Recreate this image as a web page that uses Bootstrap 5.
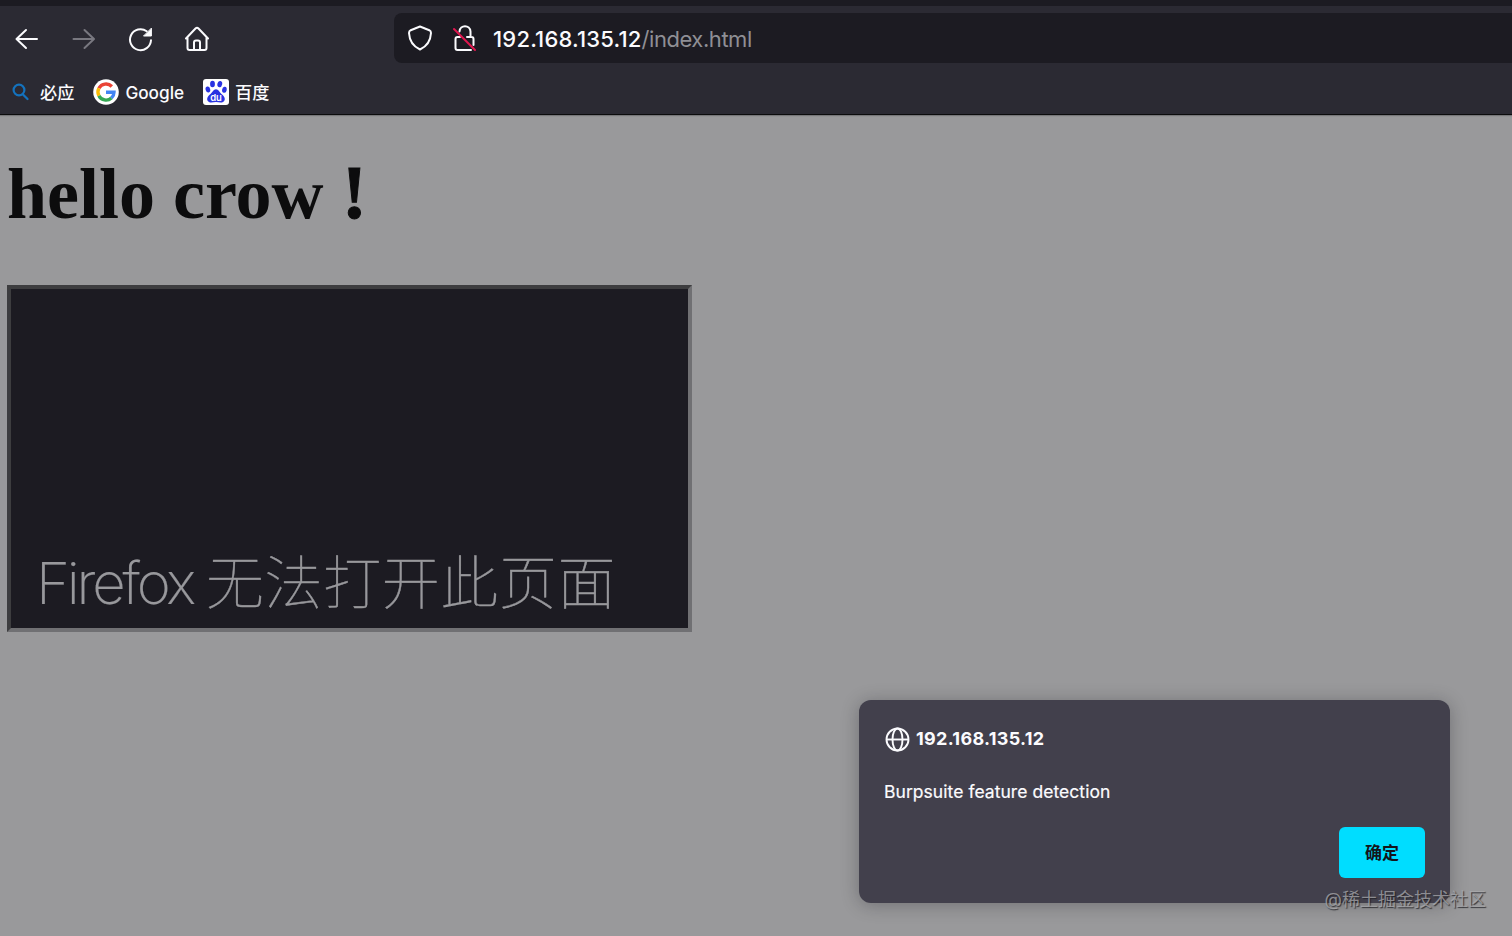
<!DOCTYPE html>
<html lang="zh-CN">
<head>
<meta charset="utf-8">
<title>192.168.135.12/index.html</title>
<link rel="stylesheet" href="https://cdn.jsdelivr.net/npm/bootstrap@5.3.0/dist/css/bootstrap.min.css">
<style>
  body { font-family: Inter, "Noto Sans CJK SC", sans-serif; background: #99999b; color: #fbfbfe; height: 936px; }
  svg { display: block; flex: none; }
  .chrome { height: 115px; background: #2b2a33; border-top: 6px solid #1c1b22; border-bottom: 1px solid #0c0c0d; box-shadow: 0 1px 1px #77777a; }
  .tools { height: 65px; }
  .nav-icons { width: 394px; padding: 1px 0 0 14px; gap: 31px; }
  .address { height: 50px; margin-bottom: 1px; background: #1c1b22; border-radius: 8px 0 0 8px; padding-left: 13px; font-size: 22px; letter-spacing: -.45px; }
  .address .shield { margin-right: 18px; }
  .address .lock { margin-right: 15px; }
  .address .url { padding-top: 2px; }
  .address .host { font-weight: 500; letter-spacing: .2px; }
  .address .path { color: #8f8f95; }
  .bookmarks { height: 43px; padding-left: 12px; font-size: 17.2px; font-weight: 500; }
  .bookmarks svg { margin-top: -1px; }
  .bookmarks .label { margin: 0 19px 0 6px; }
  .bookmarks .label-bing { margin: 0 19px 0 11px; }
  .viewport { height: 821px; padding: 41px 7px 0; }
  .greeting { font: bold 72px/76px "Liberation Serif", serif; color: #0c0c0d; margin: 0 0 53px 0; }
  .greeting .bang { font-size: 76px; line-height: 0; -webkit-text-stroke: 1px #0c0c0d; }
  .frame { width: 685px; height: 347px; background: #1c1b22; border: 4px solid; border-color: #3d3d3f #707073 #707073 #3d3d3f; padding: 0 0 9px 25px; }
  .frame h2 { font-size: 58px; line-height: 72px; font-weight: 100; color: #98989c; margin: 0; white-space: nowrap; letter-spacing: .6px; -webkit-text-stroke: .4px #98989c; }
  .frame .latin { font-weight: 200; letter-spacing: -3.200px; -webkit-text-stroke: .2px #98989c; }
  .prompt { right: 62px; bottom: 33px; width: 591px; height: 203px; background: #42404c; border-radius: 12px; padding: 25px; box-shadow: 0 2px 18px rgba(20,20,25,.3); }
  .origin { font-size: 18px; font-weight: 700; line-height: 27px; gap: 6px; letter-spacing: .3px; }
  .message { font-size: 17.5px; line-height: 26px; margin-top: 27px; letter-spacing: .05px; -webkit-text-stroke: .2px #fbfbfe; }
  .btn-accept, .btn-accept:hover { width: 86px; height: 51px; background: #00ddff; color: #15141a; border: 0; border-radius: 6px; font-size: 17px; font-weight: 700; padding: 2px 0 0; }
  .watermark { right: 26px; bottom: 22px; font-size: 18px; line-height: 28px; color: rgba(175,175,178,.72); text-shadow: 1px 1px 1px rgba(30,30,35,.8); white-space: nowrap; }
</style>
</head>
<body class="overflow-hidden position-relative">
<header class="chrome">
  <div class="tools d-flex align-items-center">
    <nav class="nav-icons d-flex align-items-center flex-shrink-0">
      <svg width="25" height="26" viewBox="0 0 25 26" fill="none" stroke="#fbfbfe" stroke-width="2" stroke-linecap="round" stroke-linejoin="round"><path d="M23 13H3M12 4 2.500 13 12 22"/></svg>
      <svg width="26" height="26" viewBox="0 0 26 26" fill="none" stroke="#797880" stroke-width="2" stroke-linecap="round" stroke-linejoin="round"><path d="M3.500 13h20M14.500 4l9.500 9-9.500 9"/></svg>
      <svg width="26" height="26" viewBox="0 0 26 26" fill="none" stroke="#fbfbfe" stroke-width="2" stroke-linecap="round"><path d="M24 14.300A10.500 10.500 0 1 1 19.700 5.200"/><path d="M24.400 2.500v7.500h-7.500z" fill="#fbfbfe" stroke-width="1" stroke-linejoin="round"/></svg>
      <svg width="26" height="26" viewBox="0 0 26 26" fill="none" stroke="#fbfbfe" stroke-width="2" stroke-linecap="round" stroke-linejoin="round"><path d="M2 12.500 11.500 2.500Q13 1 14.500 2.500L24 12.500M3.500 11.500V22q0 2 2 2h15q2 0 2-2V11.500M10 24v-7.500q0-2 2-2h2q2 0 2 2V24"/></svg>
    </nav>
    <div class="address d-flex align-items-center flex-grow-1">
      <svg class="shield" width="25" height="26" viewBox="0 0 25 26" fill="none" stroke="#fbfbfe" stroke-width="2" stroke-linejoin="round"><path d="M13 1.500 22.300 5.200Q24 6 24 8C23.500 17 19.500 21.500 13 24.500 6.500 21.500 2.500 17 2 8Q2 6 3.700 5.200Z"/></svg>
      <svg class="lock" width="28" height="28" viewBox="0 0 28 28" fill="none" stroke="#fbfbfe" stroke-width="2" stroke-linecap="round" stroke-linejoin="round"><path d="M9.500 7.500C10 .5 20 .5 20.500 7.500V13M17 13h4.500q2 0 2 2v6M10 13H7.500q-2 0-2 2v9q0 2 2 2h13.500"/><path d="m4 5 21 21" stroke="#e2164f"/></svg>
      <span class="url text-nowrap"><span class="host">192.168.135.12</span><span class="path">/index.html</span></span>
    </div>
  </div>
  <div class="bookmarks d-flex align-items-center">
    <svg width="17" height="18" viewBox="0 0 17 18" fill="none" stroke="#1472bd" stroke-width="2.200" stroke-linecap="round"><circle cx="7" cy="7" r="5.400"/><path d="m11 11.500 4.500 4.500"/></svg>
    <span class="label-bing">必应</span>
    <svg width="26" height="26" viewBox="0 0 26 26"><circle cx="13" cy="13" r="12.800" fill="#fff"/><g fill="none" stroke-width="3.400"><path d="M5.900 9.300A8 8 0 0 1 18.800 7.500" stroke="#ea4335"/><path d="M5.900 9.300a8 8 0 0 0 0 7.400" stroke="#fbbc05"/><path d="M5.900 16.700a8 8 0 0 0 12.500 2.300" stroke="#34a853"/><path d="M18.400 19A8 8 0 0 0 21 13.200H13" stroke="#4285f4"/></g></svg>
    <span class="label">Google</span>
    <svg width="26" height="26" viewBox="0 0 26 26"><rect width="26" height="26" rx="3" fill="#fff"/><g fill="#2932e1"><ellipse cx="9.500" cy="5" rx="2.400" ry="3.300"/><ellipse cx="16.800" cy="5.100" rx="2.400" ry="3.200" transform="rotate(12 16.800 5.100)"/><ellipse cx="4.900" cy="10.500" rx="2.300" ry="3" transform="rotate(-15 4.900 10.500)"/><ellipse cx="21.400" cy="10.800" rx="2.300" ry="3" transform="rotate(10 21.400 10.800)"/><path d="M13 10.200c2.500 0 3.500 3 5.500 4.700 3.500 2.700 4 5.600 2.500 7.300-2 2.200-5 .8-8 .8s-6 1.400-8-.8c-1.500-1.700-1-4.600 2.500-7.300 2-1.700 3-4.700 5.500-4.700z"/></g><text x="13" y="21.500" text-anchor="middle" font-family="Inter" font-size="9.500" font-weight="600" fill="#fff">du</text></svg>
    <span class="label">百度</span>
  </div>
</header>
<main class="viewport">
  <h1 class="greeting">hello crow <span class="bang">!</span></h1>
  <section class="frame d-flex align-items-end"><h2><span class="latin">Firefox </span>无法打开此页面</h2></section>
</main>
<div class="prompt position-absolute d-flex flex-column" role="dialog">
  <div class="origin d-flex align-items-center">
    <svg width="26" height="26" viewBox="0 0 26 26" fill="none" stroke="#fbfbfe" stroke-width="1.900"><circle cx="13.500" cy="13.500" r="11"/><path d="M2.500 13.500h22"/><ellipse cx="13.500" cy="13.500" rx="5" ry="11"/></svg>
    <span>192.168.135.12</span>
  </div>
  <div class="message">Burpsuite feature detection</div>
  <button class="btn btn-accept mt-auto align-self-end" type="button">确定</button>
</div>
<div class="watermark position-absolute">@稀土掘金技术社区</div>
<script src="https://cdn.jsdelivr.net/npm/bootstrap@5.3.0/dist/js/bootstrap.bundle.min.js"></script>
</body>
</html>
